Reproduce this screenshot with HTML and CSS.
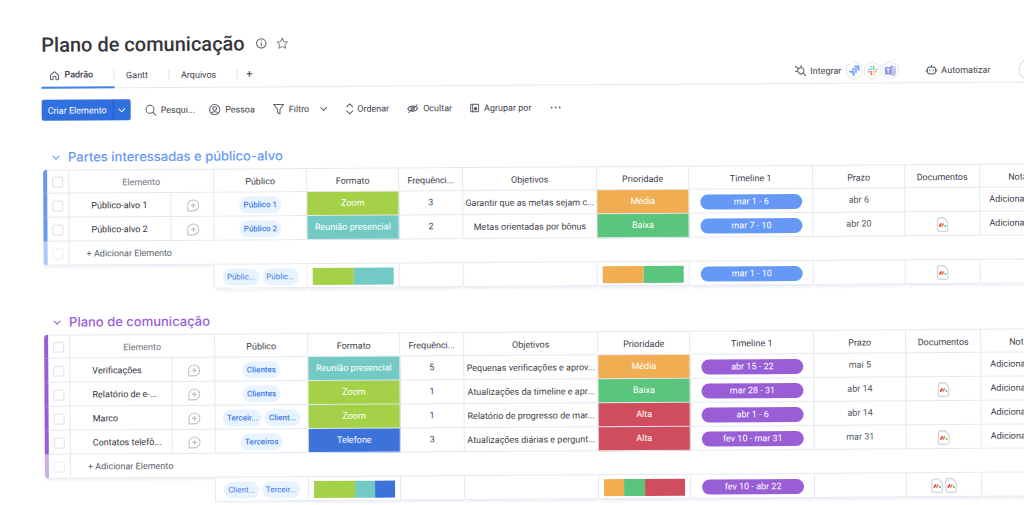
FILE: index.html
```html
<!DOCTYPE html>
<html lang="pt-BR">
<head>
<meta charset="utf-8">
<title>Plano de comunicação</title>
<link rel="stylesheet" href="styles.css">
</head>
<body>
<svg class="sprite" aria-hidden="true">
  <symbol id="comment" viewBox="0 0 14 14"><path d="M2.200 12.200V7A5.100 5.100 0 1 1 7.300 12.200z" /><path d="M7.300 4.700v4.800M4.900 7.100h4.800"/></symbol>
  <symbol id="chevron" viewBox="0 0 8 8"><path d="M1 2.500l3 3 3-3"/></symbol>
  <symbol id="doc" viewBox="0 0 12 15"><path d="M2 .8h5.600l3.600 3.800v8.200a1.400 1.400 0 0 1-1.400 1.400H2A1.400 1.400 0 0 1 .8 12.800V2.200A1.400 1.400 0 0 1 2 .8z" fill="#fff" stroke="#c9cad0"/><g stroke-linecap="round" stroke-width="1.700"><path d="M3.200 9l1.300-2.200" stroke="#e8334f"/><path d="M5.600 9l1.300-2.200" stroke="#f28a2e"/></g><circle cx="8.800" cy="8.900" r="1" fill="#3fc880"/></symbol>
</svg>
<main class="board">
  <header class="heading">
    <h1>Plano de comunicação</h1>
    <button class="icon-btn" aria-label="Informações"><svg class="icon i12" viewBox="0 0 12 12"><circle cx="6" cy="6" r="4.700"/><path d="M6 5.400v3M6 3.400v.3"/></svg></button>
    <button class="icon-btn" aria-label="Favoritar"><svg class="icon i12 muted" viewBox="0 0 12 12"><path d="M6 .8l1.600 3.400 3.700.5-2.700 2.600.7 3.700L6 9.200 2.700 11l.7-3.700L.7 4.700l3.700-.5z"/></svg></button>
  </header>

  <div class="nav-row">
    <nav class="tabs">
      <a class="tab active" href="#padrao"><svg class="icon i10" viewBox="0 0 10 10"><path d="M1 4.500L5 1l4 3.500V8.300a.7.7 0 0 1-.7.7H6.500V7a1.500 1.500 0 0 0-3 0v2H1.700A.7.7 0 0 1 1 8.300z"/></svg>Padrão</a>
      <a class="tab" href="#gantt">Gantt</a>
      <a class="tab" href="#arquivos">Arquivos</a>
      <button class="add-tab" aria-label="Adicionar visualização">+</button>
    </nav>
    <div class="extras">
      <button class="tool"><svg class="icon i12" viewBox="0 0 12 12"><path d="M4 3.500L7 2.300 9.700 5 8.700 8 6 9.300 3 6.500zM1 1.500l2.700 2M.6 6.300L3 6.500M6.500.6L7 2.300M8.700 8l2.500 2.700"/></svg>Integrar</button>
      <span class="apps">
        <svg class="hex" viewBox="0 0 18 20"><path class="edge" d="M9 1l7.800 4.500v9L9 19l-7.800-4.500v-9z"/><path fill="#6b9ff5" d="M8.500 5h5.500v5.500a2 2 0 0 1-2-2V7h-1.500a2 2 0 0 1-2-2z"/><path fill="#8db7fb" d="M6 7.500h5.500V13a2 2 0 0 1-2-2V9.500H8a2 2 0 0 1-2-2z"/><path fill="#6b9ff5" d="M3.500 10H9v5.500a2 2 0 0 1-2-2V12H5.500a2 2 0 0 1-2-2z"/></svg>
        <svg class="hex" viewBox="0 0 18 20"><path class="edge" d="M9 1l7.800 4.500v9L9 19l-7.800-4.500v-9z"/><g fill="none" stroke-width="1.800" stroke-linecap="round"><path stroke="#83cfee" d="M5.500 8.800h2.600M7.800 5.800v.4"/><path stroke="#7fcda6" d="M10.200 6v2.800M13 8.800h.2"/><path stroke="#efc668" d="M10.200 11.200h2.600M10.200 14v.2"/><path stroke="#e88299" d="M7.800 11.200V14M5.200 11.200h.2"/></g></svg>
        <svg class="hex" viewBox="0 0 18 20"><path class="edge" d="M9 1l7.800 4.500v9L9 19l-7.800-4.500v-9z"/><path fill="#c1c4ea" d="M9 8h5.500v4.500A2.500 2.500 0 0 1 9 13z"/><circle cx="10.300" cy="6.300" r="1.500" fill="#9fa4da"/><circle cx="13.400" cy="6.800" r="1" fill="#b6b9e4"/><path fill="#8f95d2" d="M3.500 6.500H10v7.500H3.500z"/><path stroke="#fff" fill="none" d="M5 8.500h3.500M6.750 8.500V12.500"/></svg>
      </span>
      <button class="tool auto"><svg class="icon i12" viewBox="0 0 12 12"><rect x="2" y="2.800" width="8" height="7" rx="2.500"/><path d="M6 1.200v1.600M.6 5.200v2.200M11.400 5.200v2.200M4.400 5.600v1M7.600 5.600v1"/></svg>Automatizar</button>
      <button class="round" aria-label="Membros"></button>
    </div>
  </div>

  <div class="toolbar">
    <div class="cluster">
      <div class="split">
        <button class="create">Criar Elemento</button>
        <button class="more" aria-label="Mais opções"><svg class="icon i8"><use href="#chevron"/></svg></button>
      </div>
      <button class="tool"><svg class="icon i12" viewBox="0 0 12 12"><circle cx="5.300" cy="5.300" r="4"/><path d="M8.300 8.300l3 3"/></svg>Pesqui...</button>
      <button class="tool"><svg class="icon i12" viewBox="0 0 12 12"><circle cx="6" cy="6" r="5.100"/><circle cx="6" cy="4.900" r="1.900"/><path d="M2.700 9.600c1.300-2 5.300-2 6.600 0"/></svg>Pessoa</button>
    </div>
    <button class="tool"><svg class="icon i12" viewBox="0 0 12 12"><path d="M1 1.300h10L7.300 6v4.500l-2.400-1V6z"/></svg>Filtro<svg class="icon i8 gap"><use href="#chevron"/></svg></button>
    <button class="tool"><svg class="icon i8 tall" viewBox="0 0 8 12"><path d="M1 4l3-3 3 3M1 8l3 3 3-3"/></svg>Ordenar</button>
    <button class="tool"><svg class="icon i12" viewBox="0 0 12 12"><path d="M1 6.200c2-3.600 8-3.600 10 0-2 3.400-8 3.400-10 0zM2 10l8.500-7.500"/><circle cx="6" cy="6.200" r="1.700"/></svg>Ocultar</button>
    <button class="tool"><svg class="icon i10" viewBox="0 0 10 10"><rect x="1" y="1.200" width="8" height="7.600" rx=".8"/><path d="M3 1.200v7.600"/><path d="M4.800 4.800h2.200v2H4.800z" fill="currentColor"/></svg>Agrupar por</button>
    <button class="tool" aria-label="Mais"><svg class="icon i12 dots" viewBox="0 0 12 12"><circle cx="2" cy="6" r=".9"/><circle cx="6" cy="6" r=".9"/><circle cx="10" cy="6" r=".9"/></svg></button>
  </div>

  <section class="group blue">
    <h2><svg class="icon i8"><use href="#chevron"/></svg>Partes interessadas e público-alvo</h2>
    <table>
      <colgroup><col class="c-bar"><col class="c-check"><col class="c-name"><col class="c-talk"><col class="c-pub"><col class="c-fmt"><col class="c-freq"><col class="c-obj"><col class="c-prio"><col class="c-time"><col class="c-date"><col class="c-doc"><col class="c-note"></colgroup>
      <thead>
        <tr><td class="bar first"></td><td><input type="checkbox" aria-label="Selecionar todos"></td><th colspan="2" class="lead">Elemento</th><th>Público</th><th>Formato</th><th>Frequênci...</th><th>Objetivos</th><th>Prioridade</th><th>Timeline 1</th><th>Prazo</th><th>Documentos</th><th>Notas</th></tr>
      </thead>
      <tbody>
        <tr><td class="bar"></td><td><input type="checkbox" aria-label="Público-alvo 1"></td><td class="name">Público-alvo 1</td><td><svg class="talk"><use href="#comment"/></svg></td><td><span class="chip">Público 1</span></td><td class="fill lime">Zoom</td><td>3</td><td class="goal">Garantir que as metas sejam c...</td><td class="fill orange">Média</td><td><span class="pill">mar 1 - 6</span></td><td class="date">abr 6</td><td></td><td class="note">Adicionar</td></tr>
        <tr><td class="bar"></td><td><input type="checkbox" aria-label="Público-alvo 2"></td><td class="name">Público-alvo 2</td><td><svg class="talk"><use href="#comment"/></svg></td><td><span class="chip">Público 2</span></td><td class="fill teal">Reunião presencial</td><td>2</td><td class="goal">Metas orientadas por bônus</td><td class="fill green">Baixa</td><td><span class="pill">mar 7 - 10</span></td><td class="date">abr 20</td><td><svg class="doc"><use href="#doc"/></svg></td><td class="note">Adicionar</td></tr>
        <tr class="add"><td class="bar last"></td><td><input type="checkbox" disabled aria-label="Novo elemento"></td><td colspan="11"><button>+ Adicionar Elemento</button></td></tr>
      </tbody>
      <tfoot>
        <tr><td class="blank" colspan="4"></td><td class="sum-first"><span class="chips"><span class="chip">Públic...</span><span class="chip">Públic...</span></span></td><td><span class="battery"><i class="lime"></i><i class="teal"></i></span></td><td></td><td></td><td><span class="battery"><i class="orange"></i><i class="green"></i></span></td><td><span class="pill">mar 1 - 10</span></td><td></td><td><svg class="doc"><use href="#doc"/></svg></td><td></td></tr>
      </tfoot>
    </table>
  </section>

  <section class="group purple">
    <h2><svg class="icon i8"><use href="#chevron"/></svg>Plano de comunicação</h2>
    <table>
      <colgroup><col class="c-bar"><col class="c-check"><col class="c-name"><col class="c-talk"><col class="c-pub"><col class="c-fmt"><col class="c-freq"><col class="c-obj"><col class="c-prio"><col class="c-time"><col class="c-date"><col class="c-doc"><col class="c-note"></colgroup>
      <thead>
        <tr><td class="bar first"></td><td><input type="checkbox" aria-label="Selecionar todos"></td><th colspan="2" class="lead">Elemento</th><th>Público</th><th>Formato</th><th>Frequênci...</th><th>Objetivos</th><th>Prioridade</th><th>Timeline 1</th><th>Prazo</th><th>Documentos</th><th>Notas</th></tr>
      </thead>
      <tbody>
        <tr><td class="bar"></td><td><input type="checkbox" aria-label="Verificações"></td><td class="name">Verificações</td><td><svg class="talk"><use href="#comment"/></svg></td><td><span class="chip">Clientes</span></td><td class="fill teal">Reunião presencial</td><td>5</td><td class="goal">Pequenas verificações e aprov...</td><td class="fill orange">Média</td><td><span class="pill">abr 15 - 22</span></td><td class="date">mai 5</td><td></td><td class="note">Adicionar</td></tr>
        <tr><td class="bar"></td><td><input type="checkbox" aria-label="Relatório"></td><td class="name">Relatório de e-...</td><td><svg class="talk"><use href="#comment"/></svg></td><td><span class="chip">Clientes</span></td><td class="fill lime">Zoom</td><td>1</td><td class="goal">Atualizações da timeline e apr...</td><td class="fill green">Baixa</td><td><span class="pill">mar 28 - 31</span></td><td class="date">abr 14</td><td><svg class="doc"><use href="#doc"/></svg></td><td class="note">Adicionar</td></tr>
        <tr><td class="bar"></td><td><input type="checkbox" aria-label="Marco"></td><td class="name">Marco</td><td><svg class="talk"><use href="#comment"/></svg></td><td><span class="chips"><span class="chip">Terceir...</span><span class="chip">Client...</span></span></td><td class="fill lime">Zoom</td><td>1</td><td class="goal">Relatório de progresso de mar...</td><td class="fill red">Alta</td><td><span class="pill">abr 1 - 6</span></td><td class="date">abr 14</td><td></td><td class="note">Adicionar</td></tr>
        <tr><td class="bar"></td><td><input type="checkbox" aria-label="Contatos telefônicos"></td><td class="name">Contatos telefô...</td><td><svg class="talk"><use href="#comment"/></svg></td><td><span class="chip">Terceiros</span></td><td class="fill navy">Telefone</td><td>3</td><td class="goal">Atualizações diárias e pergunt...</td><td class="fill red">Alta</td><td><span class="pill">fev 10 - mar 31</span></td><td class="date">mar 31</td><td><svg class="doc"><use href="#doc"/></svg></td><td class="note">Adicionar</td></tr>
        <tr class="add"><td class="bar last"></td><td><input type="checkbox" disabled aria-label="Novo elemento"></td><td colspan="11"><button>+ Adicionar Elemento</button></td></tr>
      </tbody>
      <tfoot>
        <tr><td class="blank" colspan="4"></td><td class="sum-first"><span class="chips"><span class="chip">Client...</span><span class="chip">Terceir...</span></span></td><td><span class="battery"><i class="lime two"></i><i class="teal"></i><i class="navy"></i></span></td><td></td><td></td><td><span class="battery"><i class="orange"></i><i class="green"></i><i class="red two"></i></span></td><td><span class="pill">fev 10 - abr 22</span></td><td></td><td><span class="docs"><svg class="doc"><use href="#doc"/></svg><svg class="doc"><use href="#doc"/></svg></span></td><td></td></tr>
      </tfoot>
    </table>
  </section>
</main>
</body>
</html>
```
FILE: styles.css
```css
* { box-sizing: border-box; }
html { overflow: hidden; }
body {
  margin: 0;
  overflow: hidden;
  background: #fff;
  color: #3f414c;
  font-family: Roboto, "Liberation Sans", sans-serif;
  font-size: 9px;
  line-height: 12px;
  text-rendering: geometricPrecision;
}
button { padding: 0; border: 0; background: none; color: inherit; font: inherit; }
a { color: inherit; text-decoration: none; }
h1, h2 { margin: 0; }
.sprite { position: absolute; width: 0; height: 0; }

/* The whole board leans slightly */
.board {
  padding: 31px 0 0 41px;
  transform: rotate(-0.36deg);
  transform-origin: 0 0;
}

.icon {
  flex: none;
  display: block;
  fill: none;
  stroke: #5a5c66;
  stroke-width: 1;
  stroke-linecap: round;
  stroke-linejoin: round;
}
.i8 { width: 8px; height: 8px; }
.i8.tall { height: 12px; }
.i10 { width: 10px; height: 10px; }
.i12 { width: 12px; height: 12px; }
.icon.muted { stroke: #85868f; }
.icon.dots { fill: #5a5c66; stroke: none; }
.gap { margin-left: 6px; }

.heading { display: flex; align-items: center; gap: 9px; height: 28px; }
.heading h1 {
  margin-right: 2px;
  font-size: 20px;
  line-height: 28px;
  font-weight: 500;
  color: #36373d;
}

.nav-row {
  display: flex;
  justify-content: space-between;
  margin-top: 4px;
  margin-right: -20px;
  height: 26px;
  border-bottom: 1px solid #e6e9f2;
}
.tabs { display: flex; }
.tab {
  position: relative;
  display: flex;
  align-items: center;
  gap: 5px;
  padding: 2px 21px 0 12px;
}
.tab::after {
  content: "";
  position: absolute;
  right: 0;
  top: 8px;
  height: 10px;
  border-right: 1px solid #dfe1ea;
}
.tab.active {
  margin-bottom: -1px;
  padding-left: 8px;
  border-bottom: 2px solid #4381ee;
  font-weight: 500;
}
.add-tab { padding-left: 9px; font-size: 11px; }
.extras { display: flex; align-items: center; padding-right: 6px; }
.tool { display: flex; align-items: center; gap: 4px; }
.apps { display: flex; margin-left: 4px; }
.hex { width: 18px; height: 20px; }
.edge { fill: #fff; stroke: #e6e9f5; }
.auto { margin-left: 26px; }
.round {
  width: 20px;
  height: 20px;
  margin-left: 28px;
  border: 1px solid #d8daee;
  border-radius: 50%;
}

.toolbar { display: flex; align-items: center; gap: 18px; margin-top: 11px; }
.cluster { display: flex; align-items: center; gap: 14px; }
.split {
  display: flex;
  height: 21px;
  border-radius: 2px;
  overflow: hidden;
  background: #2f6fde;
  color: #fff;
}
.split .icon { stroke: #fff; }
.create { padding: 0 6px; }
.more {
  display: grid;
  place-items: center;
  width: 18px;
  border-left: 1px solid #2560c8;
}

.group { margin: 27px 0 0 1px; }
.group + .group { margin-top: 23px; }
.blue { --main: #6699f5; --soft: #aac8fb; }
.purple { --main: #995ed6; --soft: #ccb0ea; }
.group h2 {
  display: flex;
  align-items: center;
  gap: 8px;
  margin-bottom: 2px;
  padding-left: 9px;
  color: var(--main);
  font-family: Inter, "Open Sans", sans-serif;
  font-size: 13px;
  line-height: 20px;
  font-weight: 500;
}
.group h2 .icon { stroke: var(--main); }

table { width: 1018px; table-layout: fixed; border-collapse: separate; border-spacing: 0; }
.c-bar { width: 4px; }
.c-check { width: 22px; }
.c-name { width: 102px; }
.c-talk { width: 43px; }
.c-pub { width: 93px; }
.c-fmt, .c-prio, .c-date { width: 92px; }
.c-freq { width: 64px; }
.c-obj { width: 134px; }
.c-time { width: 124px; }
.c-doc { width: 75px; }

td, th {
  height: 24px;
  padding: 1px 0 0;
  border-right: 1px solid #e6e9f2;
  border-bottom: 1px solid #e6e9f2;
  font-weight: 400;
  text-align: center;
  vertical-align: middle;
  white-space: nowrap;
}
th { padding-top: 3px; }
thead td, thead th { border-top: 1px solid #e6e9f2; }
th.lead { color: #70727d; }
td.bar { border: 0; background: var(--main); }
.first { border-top-left-radius: 4px; }
td.last { border-bottom-left-radius: 4px; background: var(--soft); }
input[type="checkbox"] {
  appearance: none;
  display: block;
  width: 11px;
  height: 11px;
  margin: 0 auto;
  border: 1px solid #dcdfec;
  border-radius: 2px;
  background: #fff;
}
input:disabled { opacity: 0.5; }
td.name { padding-top: 3px; padding-left: 22px; text-align: left; color: #32343c; }
.talk { display: block; width: 15px; height: 15px; margin: 0 auto; fill: none; stroke: #bfc1cb; }
td.goal { padding-top: 3px; }
td.date { color: #55575f; }
td.note { padding-left: 9px; text-align: left; }
.chips { display: flex; justify-content: center; gap: 3px; }
.chip {
  display: inline-block;
  padding: 0 4px;
  border-radius: 9px;
  background: #e7f3ff;
  color: #3f7be6;
  font-size: 8px;
  line-height: 17px;
  font-weight: 500;
  vertical-align: middle;
}
tfoot .chip { font-weight: 400; }
td.fill { color: #fff; }
.lime { background: #a5d148; }
.teal { background: #73cac5; }
.navy { background: #3d72da; }
.orange { background: #f1ad52; }
.green { background: #5ac57c; }
.red { background: #d04d5e; }
.pill {
  display: block;
  margin: 0 10px 0 11px;
  padding-top: 2px;
  border-radius: 8px;
  background: var(--main);
  color: #fff;
  line-height: 13px;
}
.add td { border-right: 0; }
.add td:nth-child(2) { border-right: 1px solid #e6e9f2; }
td[colspan="11"] { padding-left: 17px; text-align: left; color: #5d5f6b; }
tfoot td { box-shadow: 0 3px 3px -1px #eceef4; }
td.blank {
  border-bottom: 0;
  background: linear-gradient(#eff0f6, #fff 4px);
  box-shadow: none;
}
.sum-first { border-bottom-left-radius: 4px; }
.battery { display: flex; height: 17px; margin: 0 5px; }
.battery i { flex: 1; }
.battery .two { flex: 2; }
.doc { display: inline-block; width: 12px; height: 15px; vertical-align: middle; fill: none; }
.docs { display: flex; justify-content: center; gap: 2px; }
```
